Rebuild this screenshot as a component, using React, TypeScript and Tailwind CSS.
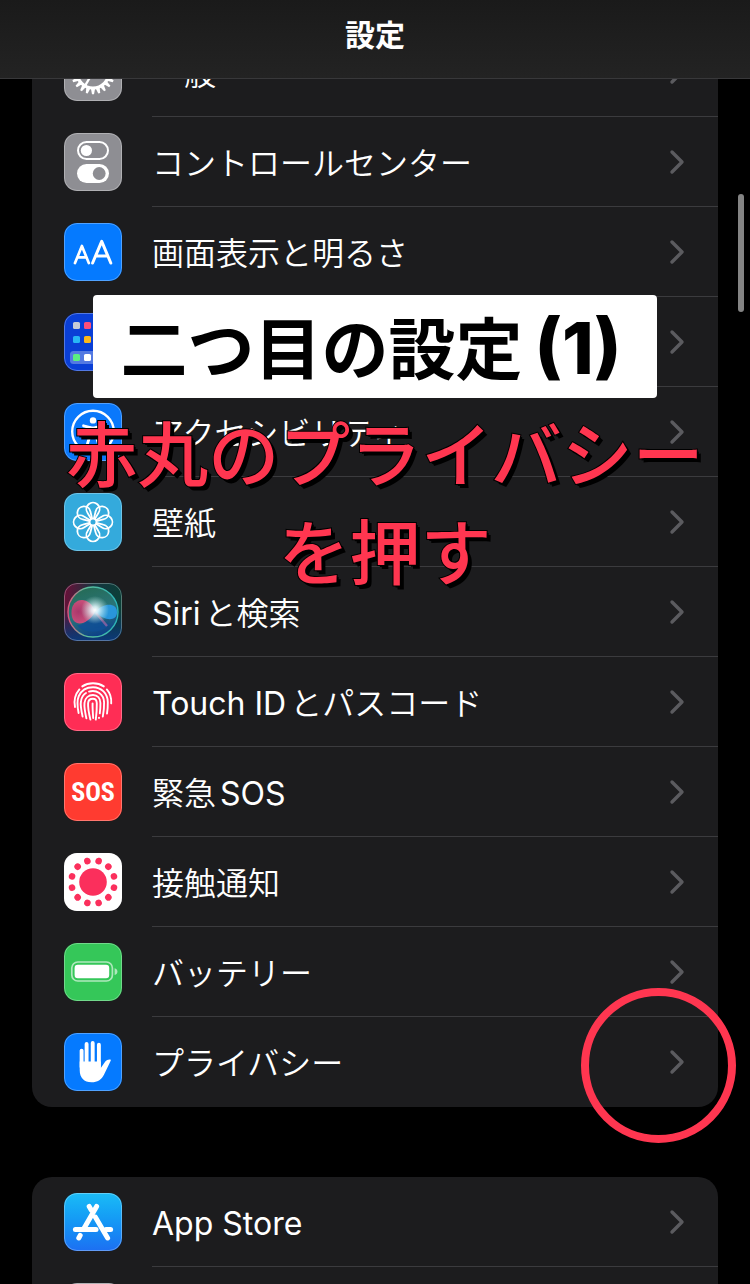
import type { ReactNode } from "react";

function Tile({ className, children }: { className: string; children?: ReactNode }) {
  return (
    <span className={`relative block size-[58px] shrink-0 overflow-hidden rounded-[13px] ${className}`}>
      <svg viewBox="0 0 58 58" className="block size-full" aria-hidden="true">
        {children}
      </svg>
      <span className="absolute inset-0 rounded-[13px] border border-white/30" />
    </span>
  );
}

function steps(n: number) {
  return Array.from({ length: n }, (_, i) => (i * 360) / n);
}

function GearIcon() {
  return (
    <Tile className="bg-[#8e8e93]">
      <g stroke="#fff" fill="none">
        <circle cx="29" cy="29" r="16" strokeWidth="3.2" />
        {steps(22).map((a) => (
          <path key={a} d="M26.9 12.6 L28 6.8 H30 L31.1 12.6Z" fill="#fff" stroke="none" transform={`rotate(${a} 29 29)`} />
        ))}
        {[0, 120, 240].map((a) => (
          <path key={a} d="M29 29 H44" strokeWidth="2.4" transform={`rotate(${a} 29 29)`} />
        ))}
        <circle cx="29" cy="29" r="4" strokeWidth="2.4" />
      </g>
    </Tile>
  );
}

function TogglesIcon() {
  return (
    <Tile className="bg-[#8e8e93]">
      <rect x="14" y="9" width="30" height="17" rx="8.5" fill="none" stroke="#fff" strokeWidth="2" />
      <circle cx="22.4" cy="17.5" r="5.6" fill="#fff" />
      <rect x="13" y="31" width="32" height="19" rx="9.5" fill="#fff" />
      <circle cx="35.2" cy="40.5" r="6.4" fill="#8e8e93" />
    </Tile>
  );
}

function DisplayIcon() {
  return (
    <Tile className="bg-[#057aff]">
      <g fill="none" stroke="#fff" strokeLinecap="round" strokeLinejoin="round">
        <path d="M11 40 L17.9 23 L24.8 40 M13.3 34.4 H22.5" strokeWidth="2.7" />
        <path d="M28.6 40 L37.7 18.3 L46.8 40 M31.6 33 H43.8" strokeWidth="3" />
      </g>
    </Tile>
  );
}

function HomeIcon() {
  const dots: [number, number, string][] = [
    [9, 9, "#c6cad6"], [20, 9, "#ff4f79"], [31, 9, "#ff9f0a"], [42, 9, "#5be37d"],
    [9, 23, "#27b6f6"], [20, 23, "#fdb81b"], [31, 23, "#c6cad6"], [42, 23, "#ff4f79"],
    [9, 41, "#5bef80"], [20, 41, "#fff"], [31, 41, "#27b6f6"], [42, 41, "#fdb81b"],
  ];
  return (
    <Tile className="bg-[#0a3fd6]">
      <rect x="6" y="38" width="46" height="13" rx="3.5" fill="#fff" opacity="0.3" />
      {dots.map(([x, y, c]) => (
        <rect key={`${x}-${y}`} x={x} y={y} width="7" height="7" rx="1.6" fill={c} />
      ))}
    </Tile>
  );
}

function AccessibilityIcon() {
  return (
    <Tile className="bg-[#0a78fb]">
      <circle cx="29" cy="28.6" r="20.8" fill="none" stroke="#fff" strokeWidth="2.4" />
      <circle cx="29" cy="17.4" r="3.2" fill="#fff" />
      <path d="M19.5 22.8 L26.5 24.6 V31 L23.4 41 M38.5 22.8 L31.5 24.6 V31 L34.6 41" fill="none" stroke="#fff" strokeWidth="2.8" strokeLinecap="round" strokeLinejoin="round" />
      <path d="M26 23.6 H32 V32 H26Z" fill="#fff" />
    </Tile>
  );
}

function WallpaperIcon() {
  return (
    <Tile className="bg-[#34aadc]">
      <g fill="none" stroke="#fff" strokeWidth="1.8">
        <circle cx="29" cy="29" r="3.4" />
        {steps(8).map((a) => (
          <path key={a} d="M27.2 26 L23.6 20 A6.6 6.6 0 1 1 34.4 20 L30.8 26" transform={`rotate(${a} 29 29)`} />
        ))}
      </g>
    </Tile>
  );
}

function SiriIcon() {
  return (
    <Tile className="bg-[#12233a]">
      <defs>
        <linearGradient id="siri-bg" x1="0" y1="0.2" x2="1" y2="0.3">
          <stop offset="0" stopColor="#6b0f38" />
          <stop offset="0.5" stopColor="#15353f" />
          <stop offset="1" stopColor="#0b4038" />
        </linearGradient>
        <linearGradient id="siri-low" x1="0" y1="0" x2="0" y2="1">
          <stop offset="0.45" stopColor="#0b2f66" stopOpacity="0" />
          <stop offset="1" stopColor="#0c3a7c" />
        </linearGradient>
        <linearGradient id="siri-orb" x1="0.3" y1="0" x2="0.6" y2="1">
          <stop offset="0" stopColor="#256b55" />
          <stop offset="0.5" stopColor="#2a7478" />
          <stop offset="1" stopColor="#0b3f8a" />
        </linearGradient>
        <linearGradient id="siri-ring" x1="0" y1="0.5" x2="1" y2="0.5">
          <stop offset="0" stopColor="#e0527c" />
          <stop offset="0.35" stopColor="#5fbf9a" />
          <stop offset="1" stopColor="#29b3b8" />
        </linearGradient>
        <radialGradient id="siri-pink" cx="0.3" cy="0.5" r="0.75">
          <stop offset="0" stopColor="#b8306a" />
          <stop offset="0.8" stopColor="#e0517f" />
          <stop offset="1" stopColor="#f7a5b8" />
        </radialGradient>
        <radialGradient id="siri-glow">
          <stop offset="0" stopColor="#fff" />
          <stop offset="0.25" stopColor="#eafcff" stopOpacity="0.85" />
          <stop offset="1" stopColor="#bdeee6" stopOpacity="0" />
        </radialGradient>
      </defs>
      <rect width="58" height="58" fill="url(#siri-bg)" />
      <rect width="58" height="58" fill="url(#siri-low)" />
      <circle cx="29" cy="29" r="25" fill="url(#siri-orb)" stroke="url(#siri-ring)" strokeWidth="1.4" />
      <path d="M31 29 C25 33 20 44 13 42 C19 51 39 51 46 41 C40 42 35 35 31 29Z" fill="#0f4f97" opacity="0.8" />
      <path d="M31 29 C26 12 7 14 7.5 30 C8 46 24 42 31 29Z" fill="url(#siri-pink)" opacity="0.9" />
      <path d="M31 29 C40 19 53 20 53 29 C53 39 40 38 31 29Z" fill="#2a9be6" opacity="0.9" />
      <path d="M32 30 L43 43" stroke="#c06aa8" strokeWidth="2.4" opacity="0.6" />
      <circle cx="31" cy="27" r="14" fill="url(#siri-glow)" />
    </Tile>
  );
}

function FingerprintIcon() {
  return (
    <Tile className="bg-[#ff2d55]">
      <g fill="none" stroke="#fff" strokeWidth="1.9" strokeLinecap="round">
        <path d="M18.3 13.4 C24.5 9.2 33.5 9.2 39.8 13.4" />
        <path d="M11 34 C9.8 28 11 21.5 15.4 16.4" />
        <path d="M42.8 16.4 C46.4 20.5 47.6 25 47.2 30.4" />
        <path d="M14.6 40 C13 32 12.8 27.5 14.8 23 C17.4 17.4 22.6 14.2 29 14.2 C37.5 14.2 43.6 20.6 43.8 29 C43.9 33 43.7 36 43 40.6" />
        <path d="M18.6 43.6 C17 36.5 16.2 32 17 28 C17.6 24.4 19.4 21.6 22 20" />
        <path d="M25 18.6 C32.6 16.4 39.8 21 40.1 29.4 C40.2 34.5 39.8 38.5 38.8 43.6" />
        <path d="M22.4 45.4 C21 39 20 34.5 20.5 29.8 C21 25 24.6 22 29 22 C33.4 22 36.3 25.2 36.4 30 C36.5 34 36.2 37 35.8 40.4 M35 44.6 V45" />
        <path d="M26.4 46.6 C24.8 40 23.8 35 24.1 30.4 C24.3 27.4 26.3 25.8 28.9 25.8 C31.4 25.8 32.7 27.6 32.8 30.2 C32.9 36 32.5 41 31.8 46.6" />
        <path d="M28.6 30.4 C28.4 35 28.8 40 29.2 45" />
      </g>
    </Tile>
  );
}

function SosIcon() {
  return (
    <Tile className="bg-[#ff3b30]">
      <text x="29" y="38" textAnchor="middle" fill="#fff" className="font-['Liberation_Sans_Narrow','Roboto_Condensed','Roboto',sans-serif] text-[26px] font-bold">
        SOS
      </text>
    </Tile>
  );
}

function ExposureIcon() {
  return (
    <Tile className="bg-white">
      <g fill="#fb2f5c">
        <circle cx="29" cy="29" r="13.8" />
        {steps(12).map((a) => (
          <circle key={a} cx="29" cy="7.3" r="3.3" transform={`rotate(${a + 15} 29 29)`} />
        ))}
      </g>
    </Tile>
  );
}

function BatteryIcon() {
  return (
    <Tile className="bg-[#35c759]">
      <g opacity="0.6">
        <rect x="7.8" y="19" width="40.6" height="19" rx="6" fill="none" stroke="#fff" strokeWidth="1.7" />
        <path d="M50.6 25.3 C54.4 26.3 54.4 31 50.6 32Z" fill="#fff" />
      </g>
      <rect x="10.6" y="21.8" width="34.6" height="13.4" rx="3.2" fill="#fff" />
    </Tile>
  );
}

function HandIcon() {
  return (
    <Tile className="bg-[#057aff]">
      <path d="M17.6 17.6 V34 M22.6 11 V34 M28.7 10 V34 M34.9 11.8 V34" stroke="#fff" strokeWidth="3.9" strokeLinecap="round" />
      <path d="M15.7 28.5 H36.8 V35 L41.3 28.6 C42.6 26.8 45 26 46.8 26.7 C47 27.6 46.2 28.8 45.4 30.4 L40.2 41.2 C37.4 46.8 33.4 49.3 27.6 49.3 C20 49.3 15.7 44.6 15.7 37Z" fill="#fff" />
    </Tile>
  );
}

function AppStoreIcon() {
  return (
    <Tile className="bg-linear-to-b from-[#1cbcf6] to-[#1d6ff2]">
      <g stroke="#fff" strokeWidth="5" strokeLinecap="round" fill="none">
        <path d="M32.6 13.4 L19.5 36.3" />
        <path d="M25.2 13.4 L27.4 17.2" />
        <path d="M31.3 24 L43.6 45" />
        <path d="M16.2 42.4 L14.8 45" />
        <path d="M11.4 36.6 H32" />
        <path d="M42 36.6 H46.6" />
      </g>
    </Tile>
  );
}

function Chevron() {
  return (
    <svg viewBox="0 0 16 26" className="mr-[33px] h-[26px] w-4 shrink-0" fill="none" stroke="#5b5b5f" strokeWidth="3.4" strokeLinecap="round" strokeLinejoin="round" aria-hidden="true">
      <path d="M3 3 L13 13 L3 23" />
    </svg>
  );
}

/* Latin runs carry a slightly heavier weight than the Japanese around them. */
function Label({ text }: { text: string }) {
  return (
    <span className="pt-1 text-[32px] leading-10 font-[350] whitespace-nowrap [text-autospace:normal]">
      {text.split(/([A-Za-z][A-Za-z ]*)/).map((run, i) =>
        i % 2 ? (
          <span key={i} className="font-normal">
            {run}
          </span>
        ) : (
          run
        ),
      )}
    </span>
  );
}

function Row({ icon, label, last, children }: { icon: ReactNode; label: string; last?: boolean; children?: ReactNode }) {
  return (
    <li className="relative">
      <a href="#" className="flex h-[90px] items-stretch pl-8">
        <span className="flex items-center">{icon}</span>
        <span className={`ml-[30px] flex flex-1 items-center justify-between border-b ${last ? "border-transparent" : "border-[#3b3b3e]"}`}>
          <Label text={label} />
          <Chevron />
        </span>
      </a>
      {children}
    </li>
  );
}

export default function App() {
  return (
    <div
      lang="ja"
      className="relative flex h-screen flex-col overflow-hidden bg-black font-['Inter','Noto_Sans_CJK_JP',sans-serif] text-white"
    >
      <header className="relative z-10 flex h-[79px] shrink-0 items-center justify-center border-b border-[#38383a] bg-linear-to-b from-[#1a1a1a] to-[#232323] pb-2">
        <h1 className="text-[30px] leading-10 font-bold">設定</h1>
      </header>

      <main className="-mt-[52px] flex flex-col gap-[70px] px-8">
        <ul className="rounded-b-[20px] bg-[#1c1c1e]">
          <Row icon={<GearIcon />} label="一般" />
          <Row icon={<TogglesIcon />} label="コントロールセンター" />
          <Row icon={<DisplayIcon />} label="画面表示と明るさ" />
          <Row icon={<HomeIcon />} label="ホーム画面" />
          <Row icon={<AccessibilityIcon />} label="アクセシビリティ" />
          <Row icon={<WallpaperIcon />} label="壁紙" />
          <Row icon={<SiriIcon />} label="Siriと検索" />
          <Row icon={<FingerprintIcon />} label="Touch IDとパスコード" />
          <Row icon={<SosIcon />} label="緊急SOS" />
          <Row icon={<ExposureIcon />} label="接触通知" />
          <Row icon={<BatteryIcon />} label="バッテリー" />
          <Row icon={<HandIcon />} label="プライバシー" last>
            <span className="pointer-events-none absolute -top-[29px] -right-[18px] size-[155px] rounded-full border-8 border-[#ff3650]" />
          </Row>
        </ul>

        <ul className="rounded-t-[20px] bg-[#1c1c1e]">
          <Row icon={<AppStoreIcon />} label="App Store" />
          <Row icon={<Tile className="bg-[#8e8e93]" />} label="" />
        </ul>
      </main>

      <span className="absolute top-[194px] right-1.5 h-[118px] w-1.5 rounded-full bg-[#848484]" />

      <div className="pointer-events-none absolute inset-x-0 top-[295px] flex flex-col items-center">
        <p className="rounded-[4px] bg-white pt-1 pr-9 pl-7 text-[67px] leading-[97px] font-bold whitespace-nowrap text-black">
          二つ目の設定<span className="ml-3 text-[72px] font-extrabold">(1)</span>
        </p>
        <p className="mt-2 pl-5 text-center text-[71px] leading-[98px] font-medium whitespace-nowrap text-[#ff3650] [-webkit-text-stroke:2px_#000] [paint-order:stroke_fill] [text-shadow:2px_2px_0_#000,4px_4px_0_#000]">
          赤丸のプライバシー
          <br />
          を押す
        </p>
      </div>
    </div>
  );
}
